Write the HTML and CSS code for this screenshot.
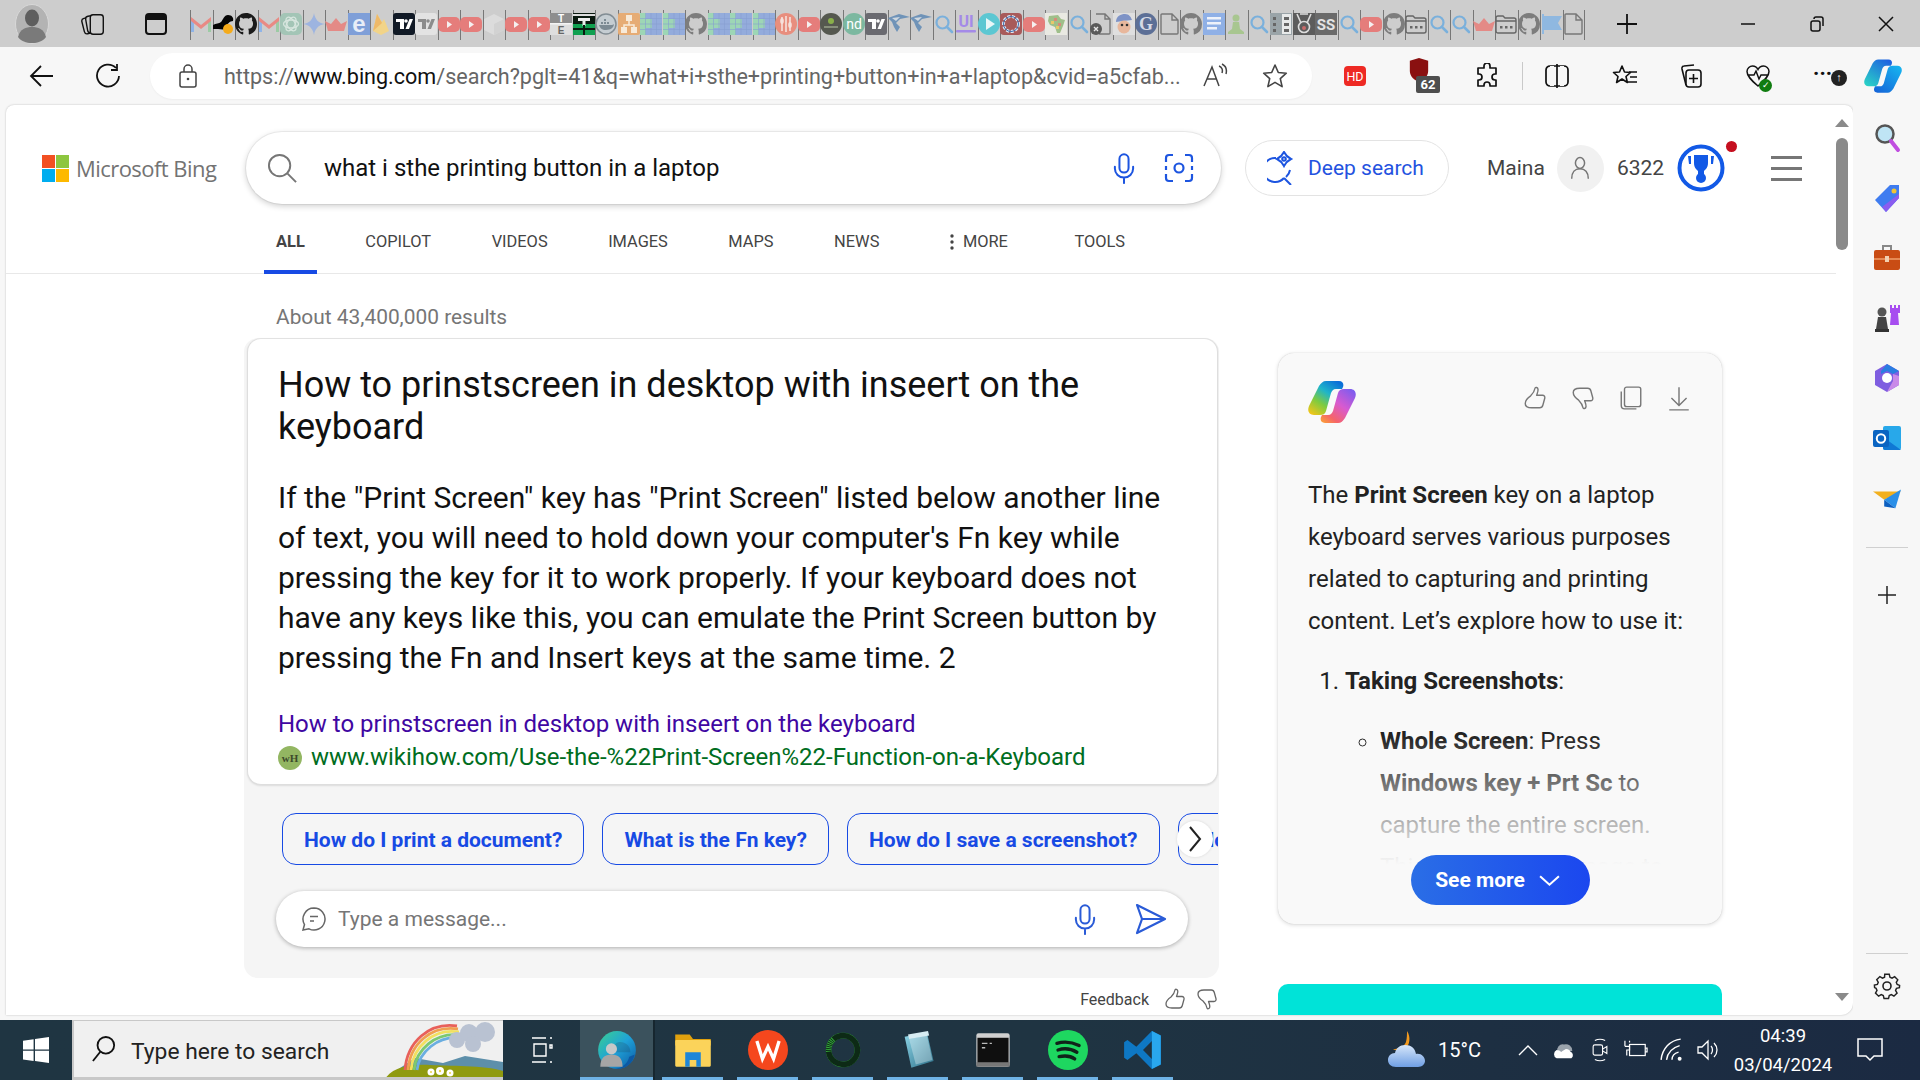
FILE: index.html
```html
<!DOCTYPE html>
<html lang="en">
<head>
<meta charset="utf-8">
<title>what i sthe printing button in a laptop - Search</title>
<link rel="stylesheet" href="styles.css">
</head>
<body>
<svg class="sprite" xmlns="http://www.w3.org/2000/svg">
<defs>
<linearGradient id="cpA" x1="0.8" y1="0" x2="0.1" y2="1"><stop offset="0" stop-color="#0a6fd8"/><stop offset="0.35" stop-color="#1fb5c9"/><stop offset="0.65" stop-color="#7ecb3f"/><stop offset="1" stop-color="#f5c518"/></linearGradient>
<linearGradient id="cpB" x1="0.9" y1="0" x2="0.1" y2="1"><stop offset="0" stop-color="#7a5cf0"/><stop offset="0.45" stop-color="#d85ad0"/><stop offset="0.8" stop-color="#f5646a"/><stop offset="1" stop-color="#fb9a3c"/></linearGradient>
<linearGradient id="cpC" x1="0.8" y1="0" x2="0.1" y2="1"><stop offset="0" stop-color="#1e63e0"/><stop offset="1" stop-color="#2ad3c6"/></linearGradient>
<linearGradient id="cpD" x1="0.9" y1="0" x2="0.1" y2="1"><stop offset="0" stop-color="#16b4f0"/><stop offset="1" stop-color="#1565d8"/></linearGradient>
<linearGradient id="edg" x1="0" y1="0" x2="1" y2="1"><stop offset="0" stop-color="#3bd08f"/><stop offset="0.5" stop-color="#1fa2d8"/><stop offset="1" stop-color="#0c59a4"/></linearGradient>
<linearGradient id="cloud" x1="0" y1="0" x2="0" y2="1"><stop offset="0" stop-color="#d6e6fa"/><stop offset="1" stop-color="#6f9fe4"/></linearGradient>
<linearGradient id="tealg" x1="0" y1="0" x2="1" y2="1"><stop offset="0" stop-color="#8ed6e8"/><stop offset="1" stop-color="#2c6f88"/></linearGradient>
</defs>
<symbol id="gm" viewBox="0 0 22 22"><path fill="#8fb4e8" d="M1 6h3v13H1z"/><path fill="#9ccba4" d="M18 6h3v13h-3z"/><path fill="#e98a84" d="M1 4l10 8 10-8v4l-10 8L1 8z"/></symbol>
<symbol id="blob" viewBox="0 0 22 22"><path fill="#050505" d="M0 12c3-2 6-1 8-3s3-7 7-7 6 3 5 6c-3 0-6 3-7 6-1 4-5 2-8 2H0z"/><circle cx="15" cy="16" r="5" fill="#f5ab1b"/></symbol>
<symbol id="gh" viewBox="0 0 16 16"><path fill="currentColor" d="M8 0C3.58 0 0 3.58 0 8c0 3.54 2.29 6.53 5.47 7.59.4.07.55-.17.55-.38 0-.19-.01-.82-.01-1.49-2.01.37-2.53-.49-2.69-.94-.09-.23-.48-.94-.82-1.13-.28-.15-.68-.52-.01-.53.63-.01 1.08.58 1.23.82.72 1.21 1.87.87 2.33.66.07-.52.28-.87.51-1.07-1.78-.2-3.64-.89-3.64-3.95 0-.87.31-1.59.82-2.15-.08-.2-.36-1.02.08-2.12 0 0 .67-.21 2.2.82.64-.18 1.32-.27 2-.27.68 0 1.36.09 2 .27 1.53-1.04 2.2-.82 2.2-.82.44 1.1.16 1.92.08 2.12.51.56.82 1.27.82 2.15 0 3.07-1.87 3.75-3.65 3.95.29.25.54.73.54 1.48 0 1.07-.01 1.93-.01 2.2 0 .21.15.46.55.38A8.013 8.013 0 0016 8c0-4.42-3.58-8-8-8z"/></symbol>
<symbol id="gpt" viewBox="0 0 22 22"><rect width="22" height="22" rx="5" fill="#a3c5b6"/><g fill="none" stroke="#d8e6df" stroke-width="1.3"><ellipse cx="11" cy="11" rx="7.5" ry="4"/><ellipse cx="11" cy="11" rx="7.5" ry="4" transform="rotate(60 11 11)"/><ellipse cx="11" cy="11" rx="7.5" ry="4" transform="rotate(120 11 11)"/></g></symbol>
<symbol id="gem" viewBox="0 0 22 22"><path fill="#9db4e0" d="M11 0c1 6 4 10 11 11-7 1-10 5-11 11-1-6-4-10-11-11 7-1 10-5 11-11z"/></symbol>
<symbol id="crown" viewBox="0 0 22 22"><path fill="#e48a86" d="M0 8l6 3 5-6 5 6 6-3-3 10H3z"/></symbol>
<symbol id="fire" viewBox="0 0 22 22"><path fill="#f2d488" d="M3 18L7 1l5 8 2-3 5 12-8 4z"/><path fill="#eeb968" d="M3 18L7 1l5 9z"/></symbol>
<symbol id="tv" viewBox="0 0 22 22"><rect width="22" height="22" rx="3" fill="#111a26"/><path fill="#fff" d="M3 6h8v10H7V9H3zM16.500 6H20l-4 10h-3.500z"/><circle cx="13" cy="8" r="1.800" fill="#fff"/></symbol>
<symbol id="tvl" viewBox="0 0 22 22"><rect width="22" height="22" rx="3" fill="#e3e3e3"/><path fill="#8c8c8c" d="M3 6h8v10H7V9H3zM16.500 6H20l-4 10h-3.500z"/><circle cx="13" cy="8" r="1.800" fill="#8c8c8c"/></symbol>
<symbol id="tvg" viewBox="0 0 22 22"><rect width="22" height="22" rx="3" fill="#6a6a70"/><path fill="#fff" d="M3 6h8v10H7V9H3zM16.500 6H20l-4 10h-3.500z"/><circle cx="13" cy="8" r="1.800" fill="#fff"/></symbol>
<symbol id="yt" viewBox="0 0 22 22"><rect y="4" width="22" height="15" rx="5" fill="#e57d7b"/><path fill="#f5f0f0" d="M9 8l5 3.500-5 3.500z"/></symbol>
<symbol id="cube" viewBox="0 0 22 22"><path fill="#dcdcdc" d="M11 1l10 5v11l-10 5-10-5V6z"/><path fill="#d2d2d2" d="M11 11l10-5v11l-10 5z"/></symbol>
<symbol id="tg" viewBox="0 0 22 22"><rect width="22" height="22" fill="#0b1a10"/><rect y="11" width="22" height="11" fill="#10a050"/><rect y="1" width="22" height="2" fill="#ddd"/><path fill="#eee" d="M5 5h12v3h-4.500v5h-3V8H5z"/><path fill="#0b1a10" d="M10 12h2v10h-2zM0 15h22v2H0z"/></symbol>
<symbol id="dock" viewBox="0 0 22 22"><circle cx="11" cy="11" r="10" fill="#c5cdd2" stroke="#828d94" stroke-width="1.500"/><path fill="#7d8b94" d="M4 12h13c1 0 2-1 2-1 0 3-3 6-8 6-4 0-6-2-7-5z"/><path fill="#7d8b94" d="M6 9h2v2H6zM9 9h2v2H9zM12 9h2v2h-2zM9 6h2v2H9z"/></symbol>
<symbol id="tree" viewBox="0 0 22 22"><rect width="22" height="22" rx="2" fill="#e6ac75"/><path fill="#f7ead9" d="M8 2h6v6H8zM3 14h6v6H3zM13 14h6v6h-6z"/><path fill="none" stroke="#f7ead9" stroke-width="1.500" d="M11 8v4M6 14v-2h10v2"/></symbol>
<symbol id="grid" viewBox="0 0 22 22"><rect width="22" height="22" fill="#94acdc"/><path fill="#9dd6b5" d="M0 0h6v6h6v9H6v7H0z"/><path fill="none" stroke="#86a0d2" stroke-width="0.600" d="M5.500 0v22M11 0v22M16.500 0v22M0 5.500h22M0 11h22M0 16.500h22"/></symbol>
<symbol id="fork" viewBox="0 0 22 22"><circle cx="11" cy="11" r="11" fill="#e88e7e"/><path stroke="#f6e1dc" stroke-width="1.600" fill="none" d="M7 4v14M11 3v16M15 4v14"/><ellipse cx="7" cy="8" rx="1.800" ry="3" fill="#f6e1dc"/><ellipse cx="15" cy="12" rx="1.800" ry="3" fill="#f6e1dc"/></symbol>
<symbol id="cc" viewBox="0 0 22 22"><circle cx="11" cy="11" r="11" fill="#55584f"/><circle cx="11" cy="8" r="3" fill="#8ab04a"/><path stroke="#a8b59a" stroke-width="1.200" d="M4 14h14"/></symbol>
<symbol id="arr" viewBox="0 0 22 22"><path fill="#6f93b8" d="M0 5l11-4 11 3-10 2-4 4 4 4-3 5-3-5-2-5z"/><path fill="#cfd8e0" d="M4 5l8-1-4 4z"/></symbol>
<symbol id="srch" viewBox="0 0 22 22"><circle cx="9.500" cy="9.500" r="6" fill="none" stroke="#7ab0dc" stroke-width="2.200"/><path stroke="#7ab0dc" stroke-width="2.600" stroke-linecap="round" d="M14 14l5 5"/></symbol>
<symbol id="play" viewBox="0 0 22 22"><circle cx="11" cy="11" r="11" fill="#5cc7d2"/><path fill="#e9f7f8" d="M8 5l9 6-9 6z"/></symbol>
<symbol id="ring" viewBox="0 0 22 22"><rect width="22" height="22" rx="4" fill="#a85a5a"/><circle cx="11" cy="11" r="7.500" fill="none" stroke="#dfe6f2" stroke-width="3" stroke-dasharray="3 1.500"/><circle cx="11" cy="11" r="7.500" fill="none" stroke="#3f6fb0" stroke-width="1"/></symbol>
<symbol id="afr" viewBox="0 0 22 22"><rect width="22" height="22" fill="#e9e9e2"/><path fill="#9fbf8a" d="M4 3l9-1 3 4 4 1-2 6-3 7-3 0-2-6-5-2-2-4z"/><path fill="#d98a7a" d="M9 5h3v3H9zM13 10h3v3h-3z"/><path fill="#e8c96a" d="M6 8h3v3H6zM11 13h3v3h-3z"/></symbol>
<symbol id="filex" viewBox="0 0 22 22"><path fill="none" stroke="#777" stroke-width="1.400" d="M6 1h9l5 5v14a1 1 0 0 1-1 1H9M15 1v5h5"/><circle cx="6" cy="16" r="6" fill="#5a5a5a"/><path stroke="#e8e8e8" stroke-width="1.400" d="M4 14l4 4M8 14l-4 4"/></symbol>
<symbol id="toon" viewBox="0 0 22 22"><rect width="22" height="22" fill="#dfdfdf"/><path fill="#7e93c6" d="M3 9c0-6 5-8 9-8s6 3 7 6l-9 1z"/><circle cx="11" cy="14" r="6.500" fill="#e8b79c"/><circle cx="9" cy="12" r="1.300" fill="#333"/><circle cx="14" cy="12" r="1.300" fill="#333"/></symbol>
<symbol id="file" viewBox="0 0 22 22"><path fill="none" stroke="#777" stroke-width="1.400" d="M3 2a1 1 0 0 1 1-1h10l6 6v13a1 1 0 0 1-1 1H4a1 1 0 0 1-1-1zM14 1v6h6"/></symbol>
<symbol id="doc" viewBox="0 0 22 22"><rect width="22" height="22" fill="#8fb0e6"/><path fill="#eef2fa" d="M4 4h14v2.500H4zM4 9h14v2.500H4zM4 14h10v2.500H4z"/></symbol>
<symbol id="chess" viewBox="0 0 22 22"><circle cx="11" cy="5" r="3.500" fill="#a8c690"/><path fill="#a8c690" d="M8 9h6l1 7 4 3v2H3v-2l4-3z"/></symbol>
<symbol id="srv" viewBox="0 0 22 22"><rect width="22" height="22" fill="#9aa4a8"/><path fill="#e8eaea" d="M12 1h9v20h-9z"/><path fill="#666" d="M3 4h3v3H3zM3 10h3v3H3zM3 16h3v3H3zM14 4h5v3h-5zM14 10h5v3h-5zM14 16h5v3h-5z"/></symbol>
<symbol id="med" viewBox="0 0 22 22"><rect width="22" height="22" fill="#5c5c5c"/><path fill="none" stroke="#ddd" stroke-width="1.600" d="M4 1l4 9M18 1l-4 9M7 1h8"/><circle cx="11" cy="14" r="5.500" fill="none" stroke="#ddd" stroke-width="1.600"/><circle cx="11" cy="15" r="2" fill="#c86a6a"/></symbol>
<symbol id="dots" viewBox="0 0 22 22"><path fill="none" stroke="#666" stroke-width="1.400" d="M1 5a2 2 0 0 1 2-2h5l2 2h9a2 2 0 0 1 2 2v11a2 2 0 0 1-2 2H3a2 2 0 0 1-2-2zM1 8h20"/><path fill="#666" d="M5 13h2.500v2.500H5zM10 13h2.500v2.500H10zM15 13h2.500v2.500H15z"/></symbol>
<symbol id="flag" viewBox="0 0 22 22"><path fill="#8fb8e0" d="M2 1h2v20H2zM4 3h18l-4 7 4 7H4z"/></symbol>
<symbol id="thumb" viewBox="0 0 24 24"><path fill="none" stroke="currentColor" stroke-width="1.300" stroke-linejoin="round" d="M8 10c2-2 3.500-4 4-7 .2-1.300 2.600-1 2.800 1 .2 2-.8 4-1.300 5.500h5.500c1.500 0 2.400 1.300 2 2.700l-1.700 6.300c-.4 1.600-1.500 2.500-3 2.500H9c-3 0-6-.5-6-4 0-3.500 2-5 5-7z"/></symbol>
<symbol id="mic" viewBox="0 0 24 34"><g fill="none" stroke="currentColor" stroke-width="2.200"><rect x="7" y="1.500" width="10" height="20" rx="5"/><path stroke-linecap="round" d="M2 15v2a10 10 0 0 0 20 0v-2M12 27v6"/></g></symbol>
</svg>

<div class="app">
  <header class="tabbar">
    <div class="profile"><svg viewBox="0 0 34 40" class="profile-svg"><ellipse cx="17" cy="20" rx="16.500" ry="19.500" fill="#b3b3b3" stroke="#d8d8d8"/><ellipse cx="17" cy="14" rx="7" ry="8.500" fill="#5e5e5e"/><path fill="#7a7a7a" d="M3 33c2-8 8-10 14-10s12 2 14 10c-3 4-8 6-14 6s-11-2-14-6z"/></svg></div>
    <div class="chrome-btn workspace"><svg viewBox="0 0 26 28" class="ico26"><g fill="#cdcdcd" stroke="#111" stroke-width="1.500"><rect x="1" y="7" width="13" height="17" rx="3" transform="rotate(-14 7 15)"/><rect x="5" y="5" width="13" height="18" rx="3" transform="rotate(-10 11 14)"/><rect x="9" y="4" width="14" height="21" rx="3"/></g></svg></div>
    <div class="chrome-btn tabtoggle"><svg viewBox="0 0 24 24" class="ico26"><rect x="2" y="2" width="20" height="20" rx="3" fill="none" stroke="#111" stroke-width="2"/><path d="M2 5a3 3 0 0 1 3-3h14a3 3 0 0 1 3 3v3H2z" fill="#111"/></svg></div>
    <div class="tabs">
      <div class="tab"><svg><use href="#gm"/></svg></div>
      <div class="tab"><svg><use href="#blob"/></svg></div>
      <div class="tab dark"><svg><use href="#gh"/></svg></div>
      <div class="tab"><svg><use href="#gm"/></svg></div>
      <div class="tab"><svg><use href="#gpt"/></svg></div>
      <div class="tab"><svg><use href="#gem"/></svg></div>
      <div class="tab"><svg><use href="#crown"/></svg></div>
      <div class="tab"><svg viewBox="0 0 22 22"><rect width="22" height="22" fill="#7f9fd8"/><text x="11" y="19" text-anchor="middle" font-family="Liberation Sans" font-weight="700" font-size="24" fill="#e8edf7">e</text></svg></div>
      <div class="tab"><svg><use href="#fire"/></svg></div>
      <div class="tab"><svg><use href="#tv"/></svg></div>
      <div class="tab"><svg><use href="#tvl"/></svg></div>
      <div class="tab"><svg><use href="#yt"/></svg></div>
      <div class="tab"><svg><use href="#yt"/></svg></div>
      <div class="tab"><svg><use href="#cube"/></svg></div>
      <div class="tab"><svg><use href="#yt"/></svg></div>
      <div class="tab"><svg><use href="#yt"/></svg></div>
      <div class="tab"><svg viewBox="0 0 22 22"><rect width="22" height="11" fill="#8e8e8e"/><rect y="11" width="22" height="11" fill="#dedede"/><rect y="10" width="22" height="1.500" fill="#f4f4f4"/><text x="11" y="9" text-anchor="middle" font-family="Liberation Sans" font-weight="700" font-size="10" fill="#fff">T</text><text x="11" y="21" text-anchor="middle" font-family="Liberation Sans" font-weight="700" font-size="10" fill="#666">E</text></svg></div>
      <div class="tab"><svg><use href="#tg"/></svg></div>
      <div class="tab"><svg><use href="#dock"/></svg></div>
      <div class="tab"><svg><use href="#tree"/></svg></div>
      <div class="tab"><svg><use href="#grid"/></svg></div>
      <div class="tab"><svg><use href="#grid"/></svg></div>
      <div class="tab"><svg><use href="#gh"/></svg></div>
      <div class="tab"><svg><use href="#grid"/></svg></div>
      <div class="tab"><svg><use href="#grid"/></svg></div>
      <div class="tab"><svg><use href="#grid"/></svg></div>
      <div class="tab"><svg><use href="#fork"/></svg></div>
      <div class="tab"><svg><use href="#yt"/></svg></div>
      <div class="tab"><svg><use href="#cc"/></svg></div>
      <div class="tab"><svg viewBox="0 0 22 22"><circle cx="11" cy="11" r="11" fill="#7cb8a0"/><text x="11" y="16" text-anchor="middle" font-family="Roboto" font-size="14" fill="#fff">nd</text></svg></div>
      <div class="tab"><svg><use href="#tvg"/></svg></div>
      <div class="tab"><svg><use href="#arr"/></svg></div>
      <div class="tab"><svg><use href="#arr"/></svg></div>
      <div class="tab"><svg><use href="#srch"/></svg></div>
      <div class="tab"><svg viewBox="0 0 22 22"><text x="11" y="14" text-anchor="middle" font-family="Roboto" font-weight="700" font-size="16" fill="#a48ae8">UI</text><rect x="1" y="17" width="20" height="2.500" rx="1" fill="#a48ae8"/></svg></div>
      <div class="tab"><svg><use href="#play"/></svg></div>
      <div class="tab"><svg><use href="#ring"/></svg></div>
      <div class="tab"><svg><use href="#yt"/></svg></div>
      <div class="tab"><svg><use href="#afr"/></svg></div>
      <div class="tab"><svg><use href="#srch"/></svg></div>
      <div class="tab"><svg><use href="#filex"/></svg></div>
      <div class="tab"><svg><use href="#toon"/></svg></div>
      <div class="tab"><svg viewBox="0 0 22 22"><circle cx="11" cy="11" r="11" fill="#5c6f96"/><text x="11" y="17" text-anchor="middle" font-family="Liberation Serif" font-weight="700" font-size="18" fill="#d5dae5">G</text></svg></div>
      <div class="tab"><svg><use href="#file"/></svg></div>
      <div class="tab"><svg><use href="#gh"/></svg></div>
      <div class="tab"><svg><use href="#doc"/></svg></div>
      <div class="tab"><svg><use href="#chess"/></svg></div>
      <div class="tab"><svg><use href="#srch"/></svg></div>
      <div class="tab"><svg><use href="#srv"/></svg></div>
      <div class="tab"><svg><use href="#med"/></svg></div>
      <div class="tab"><svg viewBox="0 0 22 22"><rect width="22" height="22" fill="#6a6a6a"/><text x="11" y="17" text-anchor="middle" font-family="Roboto" font-weight="700" font-size="15" fill="#e4e4e4">SS</text></svg></div>
      <div class="tab"><svg><use href="#srch"/></svg></div>
      <div class="tab"><svg><use href="#yt"/></svg></div>
      <div class="tab"><svg><use href="#gh"/></svg></div>
      <div class="tab"><svg><use href="#dots"/></svg></div>
      <div class="tab"><svg><use href="#srch"/></svg></div>
      <div class="tab"><svg><use href="#srch"/></svg></div>
      <div class="tab"><svg><use href="#crown"/></svg></div>
      <div class="tab"><svg><use href="#dots"/></svg></div>
      <div class="tab"><svg><use href="#gh"/></svg></div>
      <div class="tab"><svg><use href="#flag"/></svg></div>
      <div class="tab last"><svg><use href="#file"/></svg></div>
    </div>
    <div class="newtab"><svg viewBox="0 0 22 22" class="ico22"><path stroke="#111" stroke-width="1.800" d="M11 1v20M1 11h20"/></svg></div>
    <div class="winbtns">
      <svg viewBox="0 0 16 16" class="ico16"><path stroke="#111" stroke-width="1.500" d="M1 8h14"/></svg>
      <svg viewBox="0 0 16 16" class="ico16"><g fill="none" stroke="#111" stroke-width="1.500"><rect x="2" y="5" width="9" height="10" rx="2"/><path d="M5 3a2 2 0 0 1 2-2h5a2 2 0 0 1 2 2v7"/></g></svg>
      <svg viewBox="0 0 16 16" class="ico16"><path stroke="#111" stroke-width="1.500" d="M1 1l14 14M15 1L1 15"/></svg>
    </div>
  </header>

  <div class="toolbar">
    <svg viewBox="0 0 26 26" class="ico26 tb-back"><path fill="none" stroke="#111" stroke-width="1.800" d="M24 13H2M12 3L2 13l10 10"/></svg>
    <svg viewBox="0 0 26 26" class="ico26 tb-reload"><path fill="none" stroke="#111" stroke-width="1.800" d="M21 5a11 11 0 1 0 3 8M22 1v6h-6"/></svg>
    <div class="addr">
      <svg viewBox="0 0 20 26" class="lock"><g fill="none" stroke="#444" stroke-width="1.500"><rect x="2" y="9" width="16" height="15" rx="2"/><path d="M6 9V6a4 4 0 0 1 8 0v3"/></g><circle cx="10" cy="16" r="1.300" fill="#444"/></svg>
      <div class="url">https://<b>www.bing.com</b>/search?pglt=41&amp;q=what+i+sthe+printing+button+in+a+laptop&amp;cvid=a5cfab...</div>
      <svg viewBox="0 0 26 26" class="ico26 addr-read"><path fill="none" stroke="#444" stroke-width="1.500" d="M2 23L10 4l7 19M5 16h10M17 3c3 1 4 4 3 7M20 1c4 2 5 6 4 10"/></svg>
      <svg viewBox="0 0 26 26" class="ico26 addr-star"><path fill="none" stroke="#444" stroke-width="1.600" stroke-linejoin="round" d="M13 2l3.300 7.500 8 .7-6 5.400 1.800 8L13 19.400 5.900 23.600l1.800-8-6-5.400 8-.7z"/></svg>
    </div>
    <div class="tb-hd">HD</div>
    <div class="tb-ub"><svg viewBox="0 0 24 28" class="ub"><path fill="#8a1010" d="M12 1l10 3v11c0 6-5 10-10 12C7 25 2 21 2 15V4z"/></svg><span class="ub-badge">62</span></div>
    <svg viewBox="0 0 26 26" class="ico26 tb-puzzle"><path fill="none" stroke="#111" stroke-width="1.700" stroke-linejoin="round" d="M10 3a3 3 0 0 1 6 0v2h6v6h-1a3 3 0 0 0 0 6h1v6h-6v-1a3 3 0 0 0-6 0v1H4v-6h1a3 3 0 0 0 0-6H4V5h6z"/></svg>
    <div class="tb-sep"></div>
    <svg viewBox="0 0 26 26" class="ico26 tb-split"><g fill="none" stroke="#111" stroke-width="1.700"><rect x="2" y="3" width="22" height="20" rx="4"/></g><path stroke="#f7f7f7" stroke-width="4" d="M8 3v20M18 3v20"/><path stroke="#111" stroke-width="1.700" d="M13 1v24"/></svg>
    <svg viewBox="0 0 26 26" class="ico26 tb-fav"><path fill="none" stroke="#111" stroke-width="1.600" stroke-linejoin="round" d="M10 3l2.500 6 6 .5-4.500 4 1.400 6L10 16l-5.400 3.500 1.400-6-4.500-4 6-.5z"/><path stroke="#111" stroke-width="1.600" d="M17 9h8M18 14h7M16 19h9"/></svg>
    <svg viewBox="0 0 26 26" class="ico26 tb-coll"><g fill="none" stroke="#111" stroke-width="1.600"><path d="M8 22L4 6c-.3-1.500.5-3 2-3l10-1"/><rect x="8" y="7" width="15" height="17" rx="3" fill="#f7f7f7"/><path d="M15.500 11v9M11 15.500h9"/></g></svg>
    <div class="tb-heart"><svg viewBox="0 0 26 26" class="ico26"><path fill="none" stroke="#111" stroke-width="1.500" d="M13 23C6 17 2 13 2 8.500 2 5 5 3 7.500 3S12 4.500 13 6.500C14 4.500 16 3 18.500 3S24 5 24 8.500c0 4.500-4 8.500-11 14.500zM3 12h6l2-4 3 8 2-4h7"/></svg><span class="heart-ok">✓</span></div>
    <div class="tb-more"><span class="more-dots">...</span><span class="more-badge">↑</span></div>
    <svg viewBox="0 0 48 42" class="tb-cop"><path fill="url(#cpC)" d="M18 0H31C35 0 36 3 35 6L34 8H28C25 8 24 10 23 12L18 30C17 33 15 34 12 34H6C1 34-1 30 1 25L11 5C13 2 15 0 18 0z"/><path fill="url(#cpD)" d="M30 42H17C13 42 12 39 13 36L14 34H20C23 34 24 32 25 30L30 12C31 9 33 8 36 8H42C47 8 49 12 47 17L37 37C35 40 33 42 30 42z"/></svg>
  </div>

  <div class="main">
    <div class="page">
      <div class="content">
        <div class="bing-head">
          <div class="logo">
            <div class="ms"><i class="ms-r"></i><i class="ms-g"></i><i class="ms-b"></i><i class="ms-y"></i></div>
            <span class="logo-text">Microsoft Bing</span>
          </div>
          <div class="searchbox">
            <svg viewBox="0 0 32 32" class="sb-glass"><circle cx="13" cy="13" r="11" fill="none" stroke="#767676" stroke-width="2"/><path stroke="#767676" stroke-width="2" d="M21 21l9 9"/></svg>
            <span class="sb-text">what i sthe printing button in a laptop</span>
            <svg class="sb-mic"><use href="#mic"/></svg>
            <svg viewBox="0 0 30 30" class="sb-cam"><path fill="none" stroke="#1d55e0" stroke-width="2.200" d="M9 2H5a3 3 0 0 0-3 3v4M21 2h4a3 3 0 0 1 3 3v4M9 28H5a3 3 0 0 1-3-3v-4M21 28h4a3 3 0 0 0 3-3v-4M2 13v4M28 13v4"/><circle cx="15" cy="15" r="4.500" fill="none" stroke="#1d55e0" stroke-width="2.200"/></svg>
          </div>
          <div class="deep">
            <svg viewBox="0 0 30 34" class="deep-ico"><g fill="none" stroke="#1d55e0" stroke-width="2"><path d="M9 7a12 12 0 1 0 8 20M17 27l7 7M19 26a12 12 0 0 0 4-7"/><path d="M17 1c1.500 3 4 5.500 7 7-3 1.500-5.500 4-7 7-1.500-3-4-5.500-7-7 3-1.500 5.500-4 7-7z" fill="#fff"/><circle cx="17" cy="8" r="1.800"/></g></svg>
            <span>Deep search</span>
          </div>
          <span class="user">Maina</span>
          <div class="avatar"><svg viewBox="0 0 24 28" class="avatar-ico"><g fill="none" stroke="#767676" stroke-width="1.800"><ellipse cx="12" cy="8" rx="5.500" ry="6.500"/><path d="M2 27c0-8 4-12 10-12s10 4 10 12"/></g></svg></div>
          <span class="points">6322</span>
          <div class="trophy">
            <svg viewBox="0 0 48 48" class="trophy-svg"><circle cx="24" cy="24" r="21.500" fill="#fff" stroke="#1259e6" stroke-width="4"/><path fill="#1259e6" d="M17 11h14v8c0 5-3 7-4 8v3h-6v-3c-1-1-4-3-4-8zM11 12h3v8h-2zM34 12h3l-1 8h-2z"/><circle cx="24" cy="34" r="5" fill="#1259e6"/></svg>
            <span class="reddot"></span>
          </div>
          <div class="burger"><i></i><i></i><i></i></div>
        </div>

        <nav class="nav">
          <a class="nav-i active">ALL</a>
          <a class="nav-i">COPILOT</a>
          <a class="nav-i">VIDEOS</a>
          <a class="nav-i">IMAGES</a>
          <a class="nav-i">MAPS</a>
          <a class="nav-i">NEWS</a>
          <a class="nav-i nav-more"><svg viewBox="0 0 4 16" class="kebab"><circle cx="2" cy="2" r="1.700"/><circle cx="2" cy="8" r="1.700"/><circle cx="2" cy="14" r="1.700"/></svg>MORE</a>
          <a class="nav-i nav-tools">TOOLS</a>
        </nav>

        <div class="cols">
          <div class="left">
            <div class="count">About 43,400,000 results</div>
            <div class="group">
              <div class="answer">
                <h2 class="a-title">How to prinstscreen in desktop with inseert on the keyboard</h2>
                <p class="a-body">If the "Print Screen" key has "Print Screen" listed below another line of text, you will need to hold down your computer's Fn key while pressing the key for it to work properly. If your keyboard does not have any keys like this, you can emulate the Print Screen button by pressing the Fn and Insert keys at the same time. 2</p>
                <div class="a-link">How to prinstscreen in desktop with inseert on the keyboard</div>
                <div class="a-src"><span class="wh">wH</span>www.wikihow.com/Use-the-%22Print-Screen%22-Function-on-a-Keyboard</div>
              </div>
              <div class="chips">
                <span class="chip">How do I print a document?</span>
                <span class="chip">What is the Fn key?</span>
                <span class="chip">How do I save a screenshot?</span>
                <span class="chip">How do I take a screenshot?</span>
                <span class="chip-next"><svg viewBox="0 0 14 28" class="chev"><path fill="none" stroke="#222" stroke-width="2" d="M2 2l10 12L2 26"/></svg></span>
              </div>
              <div class="msg">
                <svg viewBox="0 0 26 26" class="msg-ico"><g fill="none" stroke="#666" stroke-width="1.500"><path d="M13 2a11 11 0 1 1-5 20.800L2 24l1.500-5.500A11 11 0 0 1 13 2z"/><path d="M9 10.500h8M9 15h4"/></g></svg>
                <span class="msg-text">Type a message...</span>
                <svg class="msg-mic"><use href="#mic"/></svg>
                <svg viewBox="0 0 32 32" class="msg-send"><path fill="none" stroke="#2a5bd7" stroke-width="2.200" stroke-linejoin="round" d="M2 2l28 14L2 30l5-14zM7 16h23"/></svg>
              </div>
            </div>
            <div class="feedback">
              <span>Feedback</span>
              <svg class="fb-ico"><use href="#thumb"/></svg>
              <svg class="fb-ico flip"><use href="#thumb"/></svg>
            </div>
          </div>

          <div class="right">
            <div class="copilot">
              <div class="cop-head">
                <svg viewBox="0 0 48 42" class="cop-logo"><path fill="url(#cpA)" d="M18 0H31C35 0 36 3 35 6L34 8H28C25 8 24 10 23 12L18 30C17 33 15 34 12 34H6C1 34-1 30 1 25L11 5C13 2 15 0 18 0z"/><path fill="url(#cpB)" d="M30 42H17C13 42 12 39 13 36L14 34H20C23 34 24 32 25 30L30 12C31 9 33 8 36 8H42C47 8 49 12 47 17L37 37C35 40 33 42 30 42z"/></svg>
                <div class="cop-tools">
                  <svg class="ct"><use href="#thumb"/></svg>
                  <svg class="ct flip"><use href="#thumb"/></svg>
                  <svg viewBox="0 0 24 24" class="ct"><g fill="none" stroke="currentColor" stroke-width="1.300"><rect x="6" y="2" width="15" height="18" rx="2"/><path d="M3 6v13a3 3 0 0 0 3 3h11"/></g></svg>
                  <svg viewBox="0 0 24 24" class="ct"><path fill="none" stroke="currentColor" stroke-width="1.300" d="M12 2v16M5 12l7 7 7-7M3 23h18"/></svg>
                </div>
              </div>
              <div class="cop-body">
                <p class="cop-p">The <b>Print Screen</b> key on a laptop keyboard serves various purposes related to capturing and printing content. Let’s explore how to use it:</p>
                <ol class="cop-ol">
                  <li><b>Taking Screenshots</b>:
                    <ul class="cop-ul">
                      <li><b>Whole Screen</b>: Press <b>Windows key + Prt Sc</b> to capture the entire screen. This will copy the image to the clipboard.</li>
                    </ul>
                  </li>
                </ol>
                <div class="cop-fade"></div>
              </div>
              <button class="seemore">See more<svg viewBox="0 0 22 12" class="sm-chev"><path fill="none" stroke="#fff" stroke-width="2" d="M2 2l9 8 9-8"/></svg></button>
            </div>
            <div class="teal"></div>
          </div>
        </div>
      </div>
      <div class="scroll">
        <span class="sc-up"></span>
        <span class="sc-thumb"></span>
        <span class="sc-down"></span>
      </div>
    </div>

    <aside class="side">
      <svg viewBox="0 0 28 30" class="si"><circle cx="12" cy="11" r="8.500" fill="#bfe5f5" stroke="#555" stroke-width="2.500"/><path stroke="#c04ee0" stroke-width="4" stroke-linecap="round" d="M18 18l7 9"/></svg>
      <svg viewBox="0 0 28 30" class="si"><path fill="#3f7cf0" d="M17 2h9v13L13 29 2 17z"/><path fill="#8a5cf0" d="M13 29l13-14v-4L9 24z"/><circle cx="21" cy="8" r="2.500" fill="#f0c534"/></svg>
      <svg viewBox="0 0 28 30" class="si"><path fill="none" stroke="#888" stroke-width="2" d="M10 7V3h8v4"/><rect x="1" y="7" width="26" height="20" rx="2" fill="#c94c14"/><rect x="1" y="15" width="26" height="2" fill="#e68a55"/><rect x="12" y="13" width="4" height="6" fill="#f2d0b0"/></svg>
      <svg viewBox="0 0 28 30" class="si"><circle cx="9" cy="9" r="4.500" fill="#555"/><path fill="#444" d="M5 14h8l2 12H3z"/><rect x="2" y="26" width="14" height="3" fill="#333"/><path fill="#a74df0" d="M17 2h2v3h2V2h2v3h2V2h2v8h-2l1 12h-9l1-12h-1z"/></svg>
      <svg viewBox="0 0 28 30" class="si"><path fill="#7f5ee0" d="M14 1l12 7v14l-12 7-12-7V8z"/><path fill="#2a7de1" d="M14 1l12 7-6 3-6-3-6 3V8z"/><path fill="#c98ae8" d="M14 29l12-7v-9l-6-2v7z"/><circle cx="14" cy="15" r="5" fill="#fff"/></svg>
      <svg viewBox="0 0 28 30" class="si"><rect x="10" y="3" width="18" height="24" rx="2" fill="#28a8ea"/><path fill="#0f78d4" d="M10 14l18 13H12a2 2 0 0 1-2-2z"/><rect y="7" width="16" height="17" rx="2" fill="#0a64c2"/><circle cx="8" cy="15.500" r="4.200" fill="none" stroke="#fff" stroke-width="2"/></svg>
      <svg viewBox="0 0 30 30" class="si"><path fill="#f2b01e" d="M0 8h30L12 17z"/><path fill="#2a8fe8" d="M30 6L12 17l12 9z"/><path fill="#0c5fc0" d="M12 17l12 9-12-2z"/></svg>
      <div class="side-sep"></div>
      <svg viewBox="0 0 22 22" class="si-plus"><path stroke="#222" stroke-width="1.500" d="M11 2v18M2 11h18"/></svg>
      <div class="side-sep sep-low"></div>
      <svg viewBox="0 0 28 28" class="si-gear"><g fill="none" stroke="#222" stroke-width="1.600"><path d="M11.500 2h5l.8 3.300 2.300 1 2.900-1.700 3.500 3.500-1.700 2.900 1 2.300L28 14.300v0l-.2 2.500-3.300.8-1 2.300 1.700 2.900-3.500 3.500-2.900-1.700-2.300 1-.8 3.300h-5l-.8-3.300-2.300-1-2.900 1.700-3.500-3.500 1.700-2.900-1-2.300L.2 16.800 0 14l3.300-.8 1-2.300-1.700-2.900 3.500-3.500 2.900 1.700 2.300-1z" transform="translate(1.400 .5) scale(.9)"/><circle cx="14" cy="14" r="4"/></g></svg>
    </aside>
  </div>

  <footer class="taskbar">
    <div class="start"><svg viewBox="0 0 26 26" class="win"><path fill="#fff" d="M0 3.700l10.600-1.500v10.200H0zM12 2l14-2v12.400H12zM0 13.700h10.600V24L0 22.500zM12 13.700h14V26l-14-2z"/></svg></div>
    <div class="tsearch">
      <svg viewBox="0 0 26 30" class="ts-glass"><circle cx="15" cy="11" r="9" fill="none" stroke="#111" stroke-width="2"/><path stroke="#111" stroke-width="2" d="M9 18L1 28"/></svg>
      <span class="ts-text">Type here to search</span>
      <svg viewBox="0 0 118 59" class="ts-art">
        <path fill="#5d8faa" d="M12 50L30 38l28 5 22-7 38 6v17H12z"/>
        <path fill="#8f9a10" d="M0 59C8 46 28 44 45 45s55 0 73 6v8z"/>
        <g fill="none" stroke-width="2.800"><path stroke="#e8605a" d="M20 50C22 22 44 2 72 6"/><path stroke="#f0a050" d="M23 50C25 24 46 5 73 9"/><path stroke="#f2e060" d="M26 50C28 27 48 8 74 12"/><path stroke="#7cc870" d="M29 50C31 30 50 12 75 15"/><path stroke="#6aaee0" d="M32 50C34 33 52 15 76 18"/></g>
        <g fill="#b9c2d2"><circle cx="72" cy="20" r="8"/><circle cx="84" cy="13" r="9"/><circle cx="100" cy="12" r="10"/><circle cx="88" cy="24" r="8"/></g>
        <g fill="#fff"><circle cx="46" cy="52" r="3.500"/><circle cx="55" cy="51" r="4"/><circle cx="65" cy="53" r="3.500"/></g>
        <g fill="#e9d24a"><circle cx="46" cy="52" r="1"/><circle cx="55" cy="51" r="1.200"/><circle cx="65" cy="53" r="1"/></g>
      </svg>
    </div>
    <div class="taskview"><svg viewBox="0 0 24 26" class="tv-ico"><path fill="none" stroke="#fff" stroke-width="1.400" d="M2 1h14M2 25h14M4 7h12v12H4zM20 1h2M20 8h2v3h-2zM20 25h2"/></svg></div>
    <div class="apps">
      <div class="app-i on"><svg viewBox="0 0 36 36" class="app-ico"><circle cx="18" cy="18" r="17" fill="url(#edg)"/><path fill="#1f3340" d="M19 11c6-1 11 3 11 9H14c0-5 2-8 5-9z" opacity=".2"/><path fill="#0c59a4" d="M34 22c-2 9-10 14-18 13 8-1 12-6 13-11z"/><circle cx="13" cy="17" r="5" fill="#c8c8c8"/><path fill="#a5a5a5" d="M3 33c0-8 4-11 10-11s10 3 10 11z"/></svg></div>
      <div class="app-i"><svg viewBox="0 0 36 36" class="app-ico"><path fill="#e0a10e" d="M2 4h13l3 4h16v6H2z"/><rect x="2" y="9" width="32" height="24" rx="1" fill="#fbd35a"/><path fill="#1e86d8" d="M11 20h14v13h-4v-6h-6v6h-4z"/></svg></div>
      <div class="app-i"><svg viewBox="0 0 36 36" class="app-ico"><circle cx="18" cy="18" r="18" fill="#f5471d"/><path fill="none" stroke="#fff" stroke-width="3" d="M8 10l5 16 5-11 5 11 5-16"/></svg></div>
      <div class="app-i"><svg viewBox="0 0 36 36" class="app-ico"><circle cx="18" cy="18" r="13" fill="none" stroke="#35ac3b" stroke-width="5"/><circle cx="18" cy="18" r="13" fill="none" stroke="#0d2a16" stroke-width="5" stroke-dasharray="1 1 1 1 1 1 1 1 1 1 1 1 1 1 1 1 84" pathLength="100" transform="rotate(170 18 18)"/></svg></div>
      <div class="app-i"><svg viewBox="0 0 36 36" class="app-ico"><path fill="url(#tealg)" d="M6 6l20-4 6 26-20 6z"/><path fill="#d7ecf2" d="M9 4l18-3 1 4-18 3z"/><path fill="#eef6f8" d="M10 8l16-3 5 22-15 4z" opacity=".35"/></svg></div>
      <div class="app-i"><svg viewBox="0 0 36 36" class="app-ico"><rect x="3" y="3" width="30" height="30" rx="2" fill="#d0d0d0"/><rect x="4" y="7" width="28" height="24" fill="#0f0f0f"/><rect x="3" y="29" width="30" height="4" fill="#777"/><path stroke="#bbb" stroke-width="1.200" d="M8 12h5M15 12h2M8 16h3"/></svg></div>
      <div class="app-i"><svg viewBox="0 0 36 36" class="app-ico"><circle cx="18" cy="18" r="18" fill="#1ed760"/><g fill="none" stroke="#10231a" stroke-width="3" stroke-linecap="round"><path d="M8 12c7-2 14-1 20 2"/><path d="M9 18c6-2 12-1 17 2"/><path d="M10 24c5-1 10-1 14 2"/></g></svg></div>
      <div class="app-i"><svg viewBox="0 0 36 36" class="app-ico"><path fill="#0e78c4" d="M26 1l8 4v26l-8 4-14-14-8 6-3-2V11l3-2 8 6zM26 10l-8 8 8 8z"/><path fill="#29a7ee" d="M26 1l8 4v26l-8 4z"/></svg></div>
    </div>
    <div class="tray">
      <svg viewBox="0 0 40 40" class="tr-weather"><path fill="#f29a1f" d="M20 1c4 6 3 14-2 18-4 3-9 2-12 0 6 0 11-2 13-7 1-4 1-8 1-11z"/><path fill="url(#cloud)" d="M9 37c-5 0-8-3-8-7 0-4 3-7 7-7 1-5 5-8 10-8 6 0 10 3 11 9 5-1 9 3 9 7 0 3-3 6-7 6z"/></svg>
      <span class="tr-temp">15°C</span>
      <span class="tr-s"><svg viewBox="0 0 20 12" class="tr20"><path fill="none" stroke="#fff" stroke-width="1.400" d="M1 11l9-9 9 9"/></svg></span>
      <span class="tr-s"><svg viewBox="0 0 26 20" class="tr24"><path fill="#9aa3ac" d="M6 12a6 6 0 0 1 7-8 7 7 0 0 1 9 7l-8 1z"/><path fill="#fff" d="M5 19a5 5 0 0 1 0-9c2 0 4 1 5 2l5-3c3 0 5 2 5 3a4 4 0 0 1 1 7z"/></svg></span>
      <span class="tr-s"><svg viewBox="0 0 20 28" class="tr24"><g fill="none" stroke="#fff" stroke-width="1.300"><rect x="2" y="8" width="11" height="12" rx="2"/><path d="M13 13l5-3v8l-5-3M4 3c4-2 8-2 12 0M4 25c4 2 8 2 12 0"/></g></svg></span>
      <span class="tr-s"><svg viewBox="0 0 26 22" class="tr24"><g fill="none" stroke="#fff" stroke-width="1.300"><rect x="6" y="5" width="17" height="12"/><path d="M23 9h2v4h-2M1 1v6M6 1v2M1 7h5v4H3v6"/></g></svg></span>
      <span class="tr-s"><svg viewBox="0 0 22 22" class="tr24"><g fill="none" stroke="#fff" stroke-width="1.300"><path d="M1 20C2 10 9 2 19 1M6 20c1-7 5-11 12-13M11 20c0-3 2-6 6-7"/></g><circle cx="18" cy="19" r="1.800" fill="#fff"/></svg></span>
      <span class="tr-s"><svg viewBox="0 0 24 24" class="tr24"><g fill="none" stroke="#fff" stroke-width="1.300"><path d="M2 9h4l6-6v18l-6-6H2zM15 8c2 2 2 6 0 8M18 5c4 4 4 10 0 14"/></g></svg></span>
      <div class="clock"><span>04:39</span><span>03/04/2024</span></div>
      <span class="notif"><svg viewBox="0 0 26 24" class="notif-ico"><path fill="none" stroke="#fff" stroke-width="1.500" d="M1 1h24v17h-8l-4 4-4-4H1z"/></svg></span>
    </div>
  </footer>
</div>
</body>
</html>
```

FILE: styles.css
```css
* { box-sizing: border-box; }
html, body { margin: 0; padding: 0; height: 100%; overflow: hidden; }
body { font-family: Roboto, "Liberation Sans", sans-serif; color: #111; background: #f7f7f7; }
.sprite { position: absolute; width: 0; height: 0; }
.app { display: flex; flex-direction: column; width: 1920px; height: 1080px; }
.ico26 { width: 26px; height: 26px; flex: none; display: block; }
.ico22 { width: 22px; height: 22px; display: block; }
.ico16 { width: 16px; height: 16px; display: block; }

/* tab strip */
.tabbar { height: 47px; background: #cdcdcd; display: flex; align-items: center; flex: none; }
.profile { width: 34px; margin-left: 15px; display: flex; }
.profile-svg { width: 34px; height: 40px; }
.workspace { margin-left: 32px; }
.tabtoggle { margin-left: 37px; }
.tabtoggle .ico26 { width: 24px; height: 24px; }
.tabs { display: flex; margin-left: 22px; margin-top: 3px; }
.tab { width: 22.5px; height: 30px; border-left: 1px solid #777; display: flex; align-items: center; justify-content: center; color: #7d7d7d; flex: none; overflow: visible; }
.tab.dark { color: #1a1a1a; }
.tab.last { border-right: 1px solid #777; }
.tab svg { width: 22px; height: 22px; flex: none; margin: -3px 0 0 -1px; }
.newtab { margin-left: 31px; }
.winbtns { margin-left: auto; display: flex; gap: 53px; padding-right: 26px; }

/* toolbar */
.toolbar { height: 58px; background: #f7f7f7; display: flex; align-items: center; flex: none; }
.tb-back { margin-left: 29px; }
.tb-reload { margin-left: 40px; }
.addr { margin-left: 29px; width: 1162px; height: 46px; background: #fff; border-radius: 23px; display: flex; align-items: center; box-shadow: 0 1px 2px rgba(0,0,0,.04); }
.lock { width: 20px; height: 26px; margin-left: 28px; flex: none; }
.url { margin-left: 26px; font-size: 21.55px; color: #666; white-space: nowrap; width: 957px; flex: none; }
.url b { font-weight: 400; color: #111; }
.addr-read { margin-left: 21px; }
.addr-star { margin-left: 34px; }
.tb-hd { margin-left: 32px; width: 22px; height: 20px; background: #ee2a24; color: #fff; font-size: 12.5px; border-radius: 4px; display: flex; align-items: center; justify-content: center; flex: none; }
.tb-ub { margin-left: 42px; width: 24px; height: 40px; position: relative; flex: none; }
.ub { width: 22px; height: 26px; display: block; margin-top: 1px; }
.ub-badge { position: absolute; left: 8px; top: 20px; width: 24px; height: 17px; background: #4e4e4e; color: #fff; font-size: 13px; font-weight: 700; border-radius: 2px; text-align: center; line-height: 17px; }
.tb-puzzle { margin-left: 42px; }
.tb-sep { width: 1px; height: 28px; background: #c9c9c9; margin-left: 22px; flex: none; }
.tb-split { margin-left: 21px; }
.tb-fav { margin-left: 42px; }
.tb-coll { margin-left: 40px; }
.tb-heart { margin-left: 41px; position: relative; flex: none; }
.heart-ok { position: absolute; right: -1px; bottom: -3px; width: 13px; height: 13px; border-radius: 50%; background: #107c10; color: #fff; font-size: 9px; text-align: center; line-height: 13px; }
.tb-more { margin-left: 42px; position: relative; width: 36px; height: 26px; flex: none; }
.more-dots { font-size: 22px; font-weight: 700; line-height: 10px; display: block; letter-spacing: 0; }
.more-badge { position: absolute; left: 18px; top: 7px; width: 16px; height: 16px; border-radius: 50%; background: #222; color: #fff; font-size: 11px; text-align: center; line-height: 16px; }
.tb-cop { width: 38px; height: 38px; margin-left: 15px; flex: none; }

/* page */
.main { flex: none; height: 915px; display: flex; }
.page { margin-left: 6px; width: 1847px; height: 910px; background: #fff; border-radius: 8px 8px 12px 0; box-shadow: 0 0 2px rgba(0,0,0,.25); display: flex; overflow: hidden; flex: none; }
.content { width: 1830px; flex: none; overflow: hidden; }
.scroll { width: 17px; flex: none; display: flex; flex-direction: column; align-items: center; padding-right: 5px; }
.sc-up { margin-top: 14px; width: 0; height: 0; border-left: 7px solid transparent; border-right: 7px solid transparent; border-bottom: 8px solid #8a8a8a; }
.sc-thumb { margin-top: 11px; width: 12px; height: 112px; border-radius: 6px; background: #8a8a8a; }
.sc-down { margin-top: auto; margin-bottom: 14px; width: 0; height: 0; border-left: 7px solid transparent; border-right: 7px solid transparent; border-top: 8px solid #8a8a8a; }

/* bing head */
.bing-head { height: 99px; padding-top: 27px; display: flex; align-items: center; }
.logo { margin-left: 36px; width: 204px; display: flex; align-items: center; flex: none; }
.ms { width: 27px; height: 27px; display: grid; grid-template-columns: 13px 13px; grid-template-rows: 13px 13px; gap: 1px; flex: none; }
.ms i { display: block; }
.ms-r { background: #f25022; }
.ms-g { background: #8dc63f; }
.ms-b { background: #00adef; }
.ms-y { background: #fdb900; }
.logo-text { margin-left: 7px; font-family: "Open Sans", sans-serif; font-size: 22px; letter-spacing: -.55px; color: #737373; white-space: nowrap; }
.searchbox { width: 975px; height: 72px; background: #fff; border-radius: 36px; box-shadow: 0 0 0 1px rgba(0,0,0,.05), 0 2px 6px rgba(0,0,0,.2); display: flex; align-items: center; flex: none; }
.sb-glass { width: 31px; height: 31px; margin-left: 21px; flex: none; }
.sb-text { margin-left: 26px; font-size: 24px; color: #111; white-space: nowrap; }
.sb-mic { width: 22px; height: 31px; margin-left: auto; color: #1d55e0; flex: none; }
.sb-cam { width: 30px; height: 30px; margin-left: 29px; margin-right: 27px; flex: none; }
.deep { margin-left: 24px; width: 204px; height: 56px; border: 1px solid #e3e3e3; border-radius: 28px; display: flex; align-items: center; color: #2452e0; font-size: 21px; flex: none; }
.deep-ico { width: 30px; height: 34px; margin-left: 21px; margin-right: 11px; flex: none; }
.user { margin-left: 38px; font-size: 21px; color: #444; }
.avatar { margin-left: 12px; width: 47px; height: 47px; border-radius: 50%; background: #f1f1f1; display: flex; align-items: center; justify-content: center; flex: none; }
.avatar-ico { width: 20px; height: 24px; }
.points { margin-left: 13px; font-size: 21px; color: #444; }
.trophy { margin-left: 13px; width: 48px; height: 48px; position: relative; flex: none; }
.trophy-svg { width: 48px; height: 48px; display: block; }
.reddot { position: absolute; left: 49px; top: -3px; width: 11px; height: 11px; border-radius: 50%; background: #c50f1f; }
.burger { margin-left: 46px; width: 31px; display: flex; flex-direction: column; gap: 8px; flex: none; }
.burger i { display: block; height: 3px; background: #767676; }

/* nav */
.nav { height: 70px; border-bottom: 1px solid #e8e8e8; display: flex; padding-left: 258px; gap: 36.5px; }
.nav-i { height: 70px; padding: 26px 12px 0; font-size: 16.4px; line-height: 24px; color: #444; white-space: nowrap; border-bottom: 4px solid transparent; display: flex; align-items: flex-start; }
.nav-i.active { font-weight: 700; border-bottom-color: #174ae4; }
.nav-more { padding-left: 14px; margin-left: 8px; }
.kebab { width: 4px; height: 16px; margin: 4px 9px 0 0; fill: #444; }
.nav-tools { margin-left: 6px; }

/* columns */
.cols { display: flex; align-items: flex-start; }
.left { margin-left: 238px; width: 975px; flex: none; }
.count { margin-top: 31px; padding-left: 32px; font-size: 20.9px; line-height: 24px; color: #767676; }
.group { margin-top: 9px; background: #f5f5f5; border-radius: 14px; padding-bottom: 31px; }
.answer { margin: 0 1px 0 3px; height: 447px; background: #fff; border: 1px solid #dedede; border-top-color: #e2e2e2; border-radius: 14px; box-shadow: 0 1px 2px rgba(0,0,0,.1); padding: 25px 30px 0; }
.a-title { margin: 0; font-size: 36px; font-weight: 400; line-height: 42px; color: #111; }
.a-body { margin: 30px 0 0; font-size: 30px; line-height: 40px; color: #111; }
.a-link { margin-top: 30px; font-size: 24px; line-height: 33px; color: #4007a2; white-space: nowrap; }
.a-src { font-size: 24px; line-height: 33px; color: #006d21; display: flex; align-items: center; white-space: nowrap; }
.wh { width: 24px; height: 24px; border-radius: 50%; background: #93b662; color: #3d4a2c; font-family: "Liberation Serif", serif; font-size: 11px; font-weight: 700; text-align: center; line-height: 24px; margin-right: 9px; flex: none; }
.chips { margin-top: 28px; height: 52px; padding-left: 38px; display: flex; gap: 18px; overflow: hidden; position: relative; margin-right: 1px; }
.chip { flex: none; height: 52px; padding: 0 21px; border: 1.5px solid #174ae4; border-radius: 14px; color: #174ae4; font-size: 21px; font-weight: 700; line-height: 53px; white-space: nowrap; }
.chip-next { position: absolute; left: 933px; top: 8px; width: 36px; height: 36px; border-radius: 50%; background: #fff; box-shadow: 0 0 3px rgba(0,0,0,.12); display: flex; align-items: center; justify-content: center; }
.chev { width: 14px; height: 28px; }
.msg { margin: 26px 0 0 32px; width: 912px; height: 56px; background: #fff; border-radius: 28px; box-shadow: 0 1px 4px rgba(0,0,0,.3); display: flex; align-items: center; }
.msg-ico { width: 26px; height: 26px; margin-left: 25px; flex: none; }
.msg-text { margin-left: 11px; font-size: 21px; color: #767676; }
.msg-mic { margin-left: auto; width: 22px; height: 31px; color: #2a5bd7; flex: none; }
.msg-send { width: 32px; height: 32px; margin-left: 39px; margin-right: 21px; flex: none; }
.feedback { margin-top: 9px; height: 24px; display: flex; align-items: center; justify-content: flex-end; font-size: 16px; color: #444; padding-right: 0; }
.fb-ico { width: 24px; height: 24px; margin-left: 14px; color: #666; flex: none; }
.flip { transform: rotate(180deg) scaleX(-1); }
.fb-ico.flip { margin-left: 8px; }

/* copilot card */
.right { margin-left: 59px; width: 444px; flex: none; }
.copilot { margin-top: 79px; height: 571px; background: #f9f9f9; border-radius: 16px; box-shadow: 0 0 1px rgba(0,0,0,.2), 0 1px 4px rgba(0,0,0,.15); position: relative; }
.cop-head { padding: 28px 30px 0; display: flex; justify-content: space-between; height: 70px; }
.cop-logo { width: 48px; height: 42px; flex: none; }
.cop-tools { display: flex; gap: 22px; margin-top: 3px; }
.ct { width: 26px; height: 28px; color: #777; flex: none; }
.cop-body { margin-top: 51px; height: 396px; padding: 0 30px; overflow: hidden; position: relative; font-size: 24px; line-height: 42px; color: #222; }
.cop-p { margin: 0; }
.cop-ol { margin: 18px 0 0; padding: 0 0 0 37px; }
.cop-ul { margin: 18px 0 0; padding: 0 0 0 35px; list-style: circle; }
.cop-fade { position: absolute; left: 0; right: 0; bottom: 0; height: 135px; background: linear-gradient(to bottom, rgba(249,249,249,0), #f9f9f9 96%); }
.seemore { position: absolute; left: 133px; top: 502px; width: 179px; height: 50px; border: 0; border-radius: 25px; background: linear-gradient(90deg, #2a6ee6, #1b47ef); color: #fff; font-family: Roboto, sans-serif; font-size: 21px; font-weight: 700; display: flex; align-items: center; justify-content: center; gap: 13px; padding: 0 5px 0 0; }
.sm-chev { width: 23px; height: 13px; }
.teal { margin-top: 60px; height: 60px; background: #00e3d8; border-radius: 10px 10px 0 0; }

/* sidebar */
.side { width: 67px; flex: none; background: #f7f7f7; display: flex; flex-direction: column; align-items: center; padding-top: 18px; }
.si { width: 28px; height: 30px; margin-bottom: 30px; flex: none; }
.side-sep { width: 42px; height: 1px; background: #d0d0d0; margin-top: 4px; flex: none; }
.si-plus { width: 22px; height: 22px; margin-top: 36px; flex: none; }
.sep-low { margin-top: auto; margin-bottom: 18px; }
.si-gear { width: 28px; height: 28px; margin-bottom: 20px; flex: none; }

/* taskbar */
.taskbar { flex: 1; background: linear-gradient(90deg, #1f3542, #1f3442 55%, #1b2a42); display: flex; color: #fff; }
.start { width: 72px; display: flex; align-items: center; justify-content: center; flex: none; }
.win { width: 26px; height: 26px; }
.tsearch { width: 431px; height: 60px; background: #f0f0f0; border: 1px solid #c8c8c8; border-width: 1px 0 3px 2px; display: flex; align-items: center; position: relative; overflow: hidden; flex: none; }
.ts-glass { width: 24px; height: 28px; margin-left: 18px; flex: none; }
.ts-text { margin-left: 15px; margin-top: 4px; font-size: 22.8px; color: #222; }
.ts-art { width: 118px; height: 59px; margin-left: auto; flex: none; }
.taskview { width: 77px; display: flex; align-items: center; justify-content: center; flex: none; }
.tv-ico { width: 24px; height: 26px; }
.apps { display: flex; }
.app-i { width: 75px; height: 60px; display: flex; align-items: center; justify-content: center; position: relative; flex: none; }
.app-i::after { content: ""; position: absolute; left: 7px; right: 7px; bottom: 0; height: 3px; background: #6fb3e6; }
.app-i.on { background: #3b525d; border-right: 2px solid #16262f; }
.app-i.on::after { left: 0; right: 0; }
.app-ico { width: 40px; height: 40px; }
.tray { margin-left: auto; display: flex; align-items: center; flex: none; }
.tr-weather { width: 40px; height: 40px; flex: none; }
.tr-temp { margin-left: 11px; width: 72px; font-size: 20px; }
.tr-s { width: 36px; display: flex; justify-content: center; flex: none; }
.tr20 { width: 20px; height: 12px; }
.tr24 { width: 24px; height: 24px; }
.clock { width: 114px; display: flex; flex-direction: column; align-items: center; font-size: 18.5px; line-height: 29px; padding-top: 2px; flex: none; }
.notif { width: 60px; display: flex; justify-content: center; margin-right: 20px; flex: none; }
.notif-ico { width: 26px; height: 24px; }
```
